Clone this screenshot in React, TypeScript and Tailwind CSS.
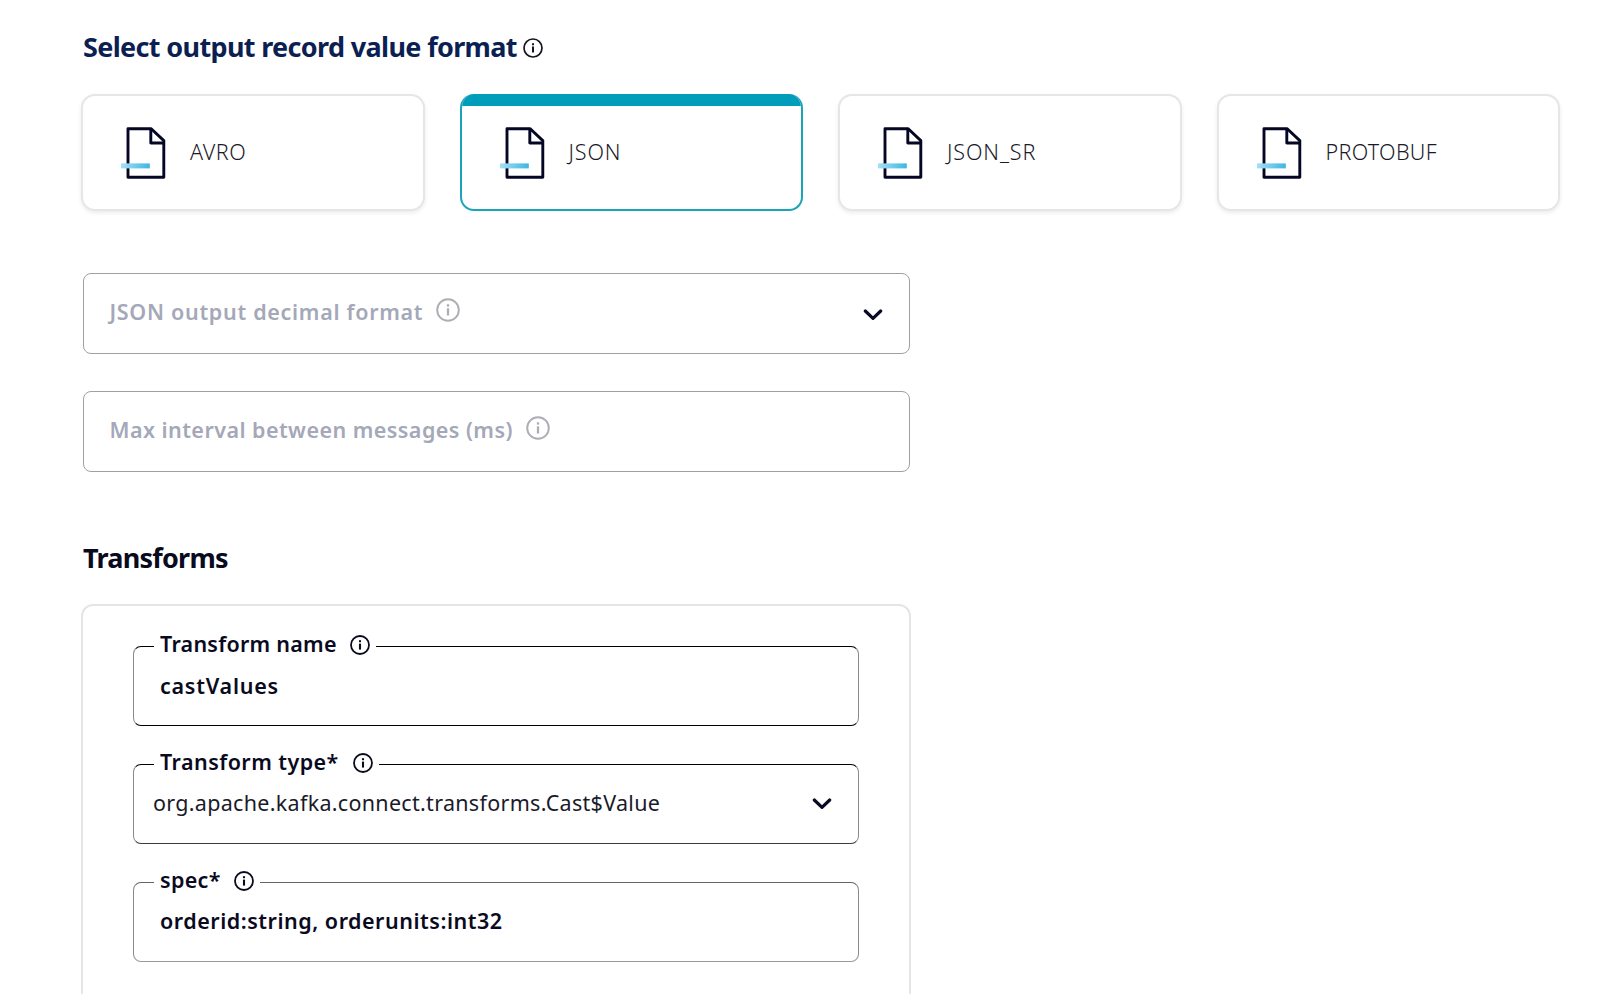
import type { ReactNode } from "react";

function InfoIcon({ className, stroke = 1.8 }: { className: string; stroke?: number }) {
  return (
    <svg viewBox="0 0 20 20" className={className} fill="none" stroke="currentColor" strokeWidth={stroke}>
      <circle cx="10" cy="10" r="9" />
      <path d="M10 8.6V14.6" strokeWidth={stroke + 0.3} />
      <path d="M10 5.2V7.2" strokeWidth={stroke + 0.3} />
    </svg>
  );
}

function Chevron() {
  return (
    <svg
      viewBox="0 0 20 12"
      className="mt-[2px] h-3 w-5 shrink-0 text-[#0a0a24]"
      fill="none"
      stroke="currentColor"
      strokeWidth="3.2"
      strokeLinecap="round"
      strokeLinejoin="round"
    >
      <path d="M2.3 2L10 9.3L17.7 2" />
    </svg>
  );
}

function FileIcon() {
  return (
    <svg viewBox="0 0 46 54" className="h-[54px] w-[46px] shrink-0" fill="none">
      <defs>
        <linearGradient id="file-bar" x1="0" x2="1" y1="0" y2="0">
          <stop offset="0" stopColor="#a5e0f8" />
          <stop offset="1" stopColor="#3cb6e0" />
        </linearGradient>
      </defs>
      <path d="M8 2.8H31.2L43.8 14.6V51.2H8Z" stroke="#050524" strokeWidth="2.9" strokeLinejoin="round" />
      <path d="M30.8 3V17H43.3" stroke="#050524" strokeWidth="2.9" strokeLinejoin="round" />
      <rect x="1" y="37.4" width="28.8" height="5" fill="url(#file-bar)" />
    </svg>
  );
}

function FormatCard({ label, tracking, selected }: { label: string; tracking: string; selected?: boolean }) {
  return (
    <div
      className={
        selected
          ? "flex h-[117px] flex-col overflow-hidden rounded-[14px] border-2 border-t-0 border-[#1ba3bb] bg-white"
          : "flex h-[117px] flex-col overflow-hidden rounded-[14px] border-2 border-[#e6e6e6] bg-white shadow-[0_2px_4px_rgba(0,0,0,0.08)]"
      }
    >
      {selected && <div className="h-3 shrink-0 bg-[#009dbb]" />}
      <div className={selected ? "flex pt-5 pl-[37px]" : "flex pt-[30px] pl-[37px]"}>
        <FileIcon />
        <span className={`mt-[-1px] ml-6 text-[21.5px] leading-[54px] font-light text-[#1a1a2a] ${tracking}`}>{label}</span>
      </div>
    </div>
  );
}

function EmptyField({ label, tracking, children }: { label: string; tracking: string; children?: ReactNode }) {
  return (
    <div className="flex h-[81px] w-[827px] items-center justify-between rounded-lg border border-[#a0a0a0] pr-[26px] pl-[26px]">
      <div className="flex items-center gap-[13px] pb-[3px] text-[#a4a8b8]">
        <span className={`text-[21.5px] leading-8 font-semibold ${tracking}`}>{label}</span>
        <InfoIcon className="mt-[-5px] size-6 text-[#adadb5]" stroke={1.6} />
      </div>
      {children}
    </div>
  );
}

type FilledFieldProps = {
  label: string;
  tracking: string;
  border: string;
  legendWidth: string;
  children: ReactNode;
};

function FilledField({ label, tracking, border, legendWidth, children }: FilledFieldProps) {
  return (
    <div className={`flex h-20 flex-col rounded-lg border border-x-[#8a8a8a] ${border}`}>
      <div className={`-mt-4 ml-5 flex h-7 shrink-0 items-center justify-between bg-white pr-1.5 pl-1.5 ${legendWidth}`}>
        <span className={`mt-[-2px] text-[21.5px] leading-7 font-semibold whitespace-nowrap text-[#0a0a1e] ${tracking}`}>{label}</span>
        <InfoIcon className="size-5 shrink-0 text-[#0a0a1e]" />
      </div>
      {children}
    </div>
  );
}

export default function App() {
  return (
    <main className="h-[994px] overflow-hidden bg-white pt-7 pl-[82px] font-['Noto_Sans',sans-serif]">
      <div className="flex h-[37px] items-center pl-px">
        <h1 className="w-[440px] text-[27px] leading-[37px] font-bold tracking-[-0.65px] whitespace-nowrap text-[#0b1f52]">
          Select output record value format
        </h1>
        <InfoIcon className="mt-[2px] size-5 text-[#14141f]" stroke={1.7} />
      </div>

      <div className="mt-[29px] -ml-px grid w-[1479px] grid-cols-4 gap-[35px]">
        <FormatCard label="AVRO" tracking="tracking-[0.5px]" />
        <FormatCard label="JSON" tracking="tracking-[0.9px]" selected />
        <FormatCard label="JSON_SR" tracking="tracking-[0.9px]" />
        <FormatCard label="PROTOBUF" tracking="tracking-[0.3px]" />
      </div>

      <div className="mt-[62px] ml-[0.5px] flex flex-col gap-[37px]">
        <EmptyField label="JSON output decimal format" tracking="tracking-[0.7px]">
          <Chevron />
        </EmptyField>
        <EmptyField label="Max interval between messages (ms)" tracking="tracking-[0.45px]" />
      </div>

      <h2 className="mt-[67px] ml-px text-[27px] leading-[37px] font-bold tracking-[-0.75px] text-[#0a0a1e]">Transforms</h2>

      <section className="-ml-px mt-7 flex h-[420px] w-[830px] flex-col gap-[38px] rounded-xl border-2 border-[#e6e4e6] px-[50px] pt-10">
        <FilledField label="Transform name" tracking="tracking-[0.25px]" border="border-y-black" legendWidth="w-[222px]">
          <span className="mt-[11px] ml-[26px] text-[21.5px] leading-8 font-semibold tracking-[0.75px] text-[#0a0a1e]">castValues</span>
        </FilledField>
        <FilledField label="Transform type*" tracking="tracking-[0.45px]" border="border-t-black border-b-[#3a3a3a]" legendWidth="w-[225px]">
          <div className="mt-[10px] ml-[19px] flex items-center justify-between pr-[26px]">
            <span className="text-[21.5px] leading-8 tracking-[0.3px] text-[#1a1a2a]">
              org.apache.kafka.connect.transforms.Cast$Value
            </span>
            <Chevron />
          </div>
        </FilledField>
        <FilledField label="spec*" tracking="tracking-[0.3px]" border="border-t-[#666] border-b-[#999]" legendWidth="w-[106px]">
          <span className="mt-[10px] ml-[26px] text-[21.5px] leading-8 font-semibold tracking-[0.52px] text-[#0a0a1e]">
            orderid:string, orderunits:int32
          </span>
        </FilledField>
      </section>
    </main>
  );
}
